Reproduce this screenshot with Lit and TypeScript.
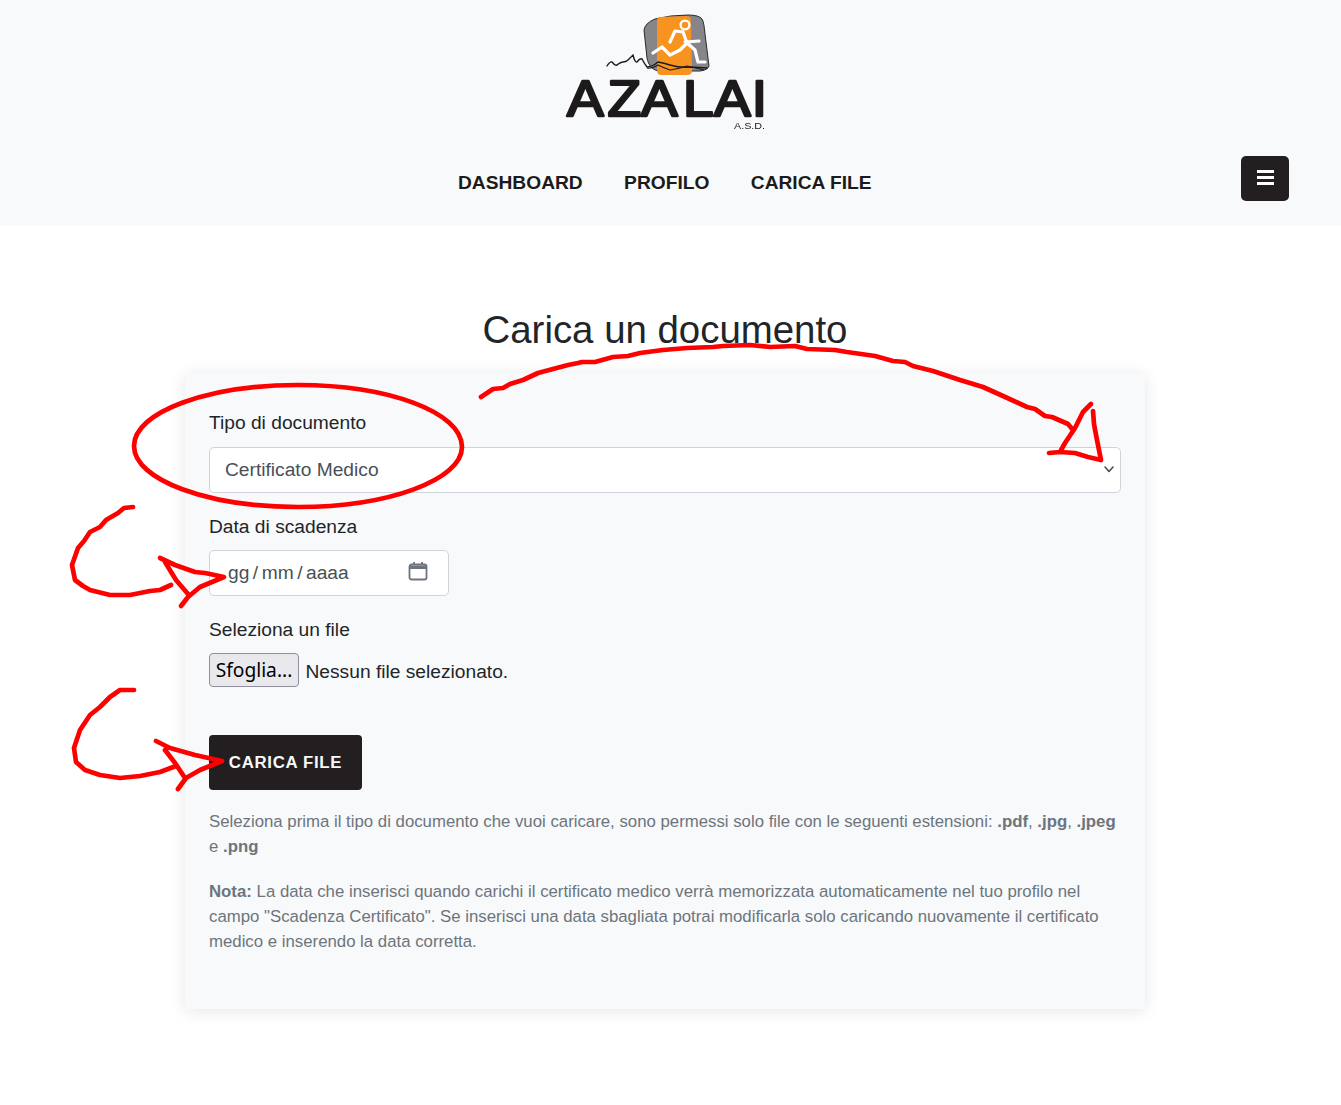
import { LitElement, html, css, svg } from "lit";
import { customElement } from "lit/decorators.js";

const logo = svg`
  <path d="M644 30 Q645 23 655 19 Q670 15 688 15 Q699 15 702 19 Q704 22 705 34 L709 66 Q708 70 700 71 L658 71 Q649 69 647 58 Z" fill="#85858a" stroke="#2a2a2a" stroke-width="1"/>
  <path d="M660 17 L686 16 Q691 16 691 21 L692 71 Q692 75 687 75 L661 75 Q657 75 657 70 L657 21 Q657 17 660 17 Z" fill="#f7931e"/>
  <path d="M607 66 Q610 61 612 62 Q615 66 617 65 Q621 62 623 62 Q626 62 628 60 L633 55 Q635 63 637 62 Q640 58 642 59 Q644 63 647 67 Q652 67 658 62 Q664 63 670 65 Q680 68 690 67 L707 68" fill="none" stroke="#1d1a1b" stroke-width="1.4" stroke-linecap="round"/>
  <path d="M647 68 Q652 69 658 65 Q664 68 670 70 Q678 69 687 66 Q696 68 704 70" fill="none" stroke="#1d1a1b" stroke-width="1.2"/>
  <circle cx="685" cy="25" r="4.4" fill="none" stroke="#fff" stroke-width="2.4"/>
  <path d="M683 32 L687 43 M683 32 L675 31 L670 42 M685 42 L699 41 M687 43 L680 50 L670 55 L662 47 L653 53 M687 43 L695 50 L698 62 L705 62" fill="none" stroke="#fff" stroke-width="3.2" stroke-linecap="round" stroke-linejoin="round"/>
  <text class="lt" transform="translate(567 116) scale(1.1 1)" x="0 36.8 67.3 105.5 133.6 168" y="0">AZALAI</text>
  <text class="ls" x="734" y="129" textLength="31" lengthAdjust="spacingAndGlyphs">A.S.D.</text>
`;

const ink = svg`
  <path d="M481 397 L493 389 L503 388 L510 384 L523 380 L538 373 L553 369 L568 365 L578 363 L582 362 L595 362 L613 357 L628 356 L640 353 L663 350 L687 348 L713 347 L723 346 L750 345 L770 347 L795 346 L807 349 L835 350 L847 352 L875 356 L893 361 L905 362 L913 366 L933 371 L960 380 L983 387 L1003 396 L1027 407 L1035 409 L1045 416 L1052 417 L1068 424 L1073 430"/>
  <path d="M1091 404 L1083 412 L1075 428 L1065 443 L1060 452 M1049 453 L1060 452 L1075 453 L1088 457 L1101 460 L1097 440 L1094 424 L1093 411"/>
  <path d="M298 385 C 208 385 134 412 134 446 C 134 480 208 507 298 507 C 388 507 462 480 462 447 C 462 412 388 385 298 385 Z"/>
  <path d="M133 507 L124 508 L118 513 L106 520 L100 527 L90 532 L84 541 L78 548 L72 565 L75 580 L83 586 L90 590 L110 595 L130 595 L150 591 L160 590 L171 585"/>
  <path d="M160 558 L175 565 L195 572 L205 573 L224 577 L200 587 L188 597 L181 606 M165 562 L176 580 L188 594"/>
  <path d="M134 690 L120 690 L110 697 L100 707 L90 715 L80 730 L74 748 L76 762 L85 770 L100 775 L120 778 L140 776 L160 772 L176 766"/>
  <path d="M156 741 L170 748 L195 755 L222 761 L200 770 L186 778 L178 789 M165 750 L175 763 L185 778"/>
`;

@customElement("app-root")
export class AppRoot extends LitElement {
  static styles = css`
    :host { display: block; position: relative; height: 1105px; overflow: hidden; background: #fff; color: #212529; font-family: "Liberation Sans", Arial, sans-serif; font-size: 19.2px; }
    * { box-sizing: border-box; }
    header { background: #f8f9fa; height: 225.6px; position: relative; }
    .logo { display: block; width: 202px; height: 120px; margin-left: 564px; position: relative; top: 12px; filter: blur(.3px); }
    .lt { font: 400 50px "Liberation Sans", Arial, sans-serif; fill: #1d1a1b; stroke: #1d1a1b; stroke-width: 2.4; stroke-linejoin: round; }
    .ls { font: 400 9.5px "Liberation Sans", Arial, sans-serif; fill: #1d1a1b; }
    nav { display: flex; gap: 41.4px; margin-left: 458px; padding-top: 51px; }
    nav a { color: #1d1a1b; font-weight: 700; font-size: 19.2px; line-height: 23px; white-space: nowrap; }
    .burger { position: absolute; left: 1241px; top: 156px; width: 48px; height: 45px; background: #231f20; border-radius: 5px; display: flex; align-items: center; justify-content: center; padding-bottom: 3px; }
    main { width: 960px; margin-left: 185px; }
    h1 { margin: 80px 0 19px; height: 48px; font-size: 38.4px; font-weight: 400; line-height: 48px; text-align: center; white-space: nowrap; color: #212529; }
    .card { height: 636.4px; background: #f8f9fa; border-radius: 3px; box-shadow: 0 2px 16px rgba(0,0,0,.1); padding: 37.4px 24px 0; }
    label { display: block; height: 25px; line-height: 25px; margin-bottom: 13px; white-space: nowrap; }
    .first { margin-bottom: 12px; }
    .tight { margin-bottom: 11px; }
    .select { position: relative; height: 46px; margin-bottom: 21px; }
    select { appearance: none; display: block; width: 100%; height: 100%; padding: 0 40px 0 15px; background: #fff; border: 1px solid #ced4da; border-radius: 5px; color: #495057; font: inherit; }
    .select svg { position: absolute; right: 5px; top: 17px; }
    .date { width: 240px; height: 46px; background: #fff; border: 1px solid #ced4da; border-radius: 5px; display: flex; align-items: center; padding: 0 20px 0 18px; color: #495057; margin-bottom: 21px; }
    .date .seg { margin: 0 3.5px; }
    .date .seg:first-child { margin-left: 0; }
    .date svg { margin-left: auto; margin-bottom: 3px; }
    .file { display: flex; align-items: center; height: 34px; margin-top: -2px; margin-bottom: 48px; }
    .browse { width: 90px; height: 34px; display: flex; align-items: center; justify-content: center; padding-bottom: 1px; background: #e9e9ed; border: 1px solid #8f8f9d; border-radius: 4px; color: #000; font: 400 19.2px "Noto Sans", sans-serif; white-space: nowrap; }
    .file span { margin-left: 6.5px; padding-top: 4px; white-space: nowrap; }
    button { display: block; width: 153px; height: 55px; padding: 2px 0 0; background: #231f20; color: #f8f9fa; border: 0; border-radius: 4px; font: 700 16.8px "Liberation Sans", Arial, sans-serif; letter-spacing: .7px; margin-bottom: 19px; }
    p { margin: 0 0 19.6px; color: #6c757d; font-size: 16.8px; line-height: 25.2px; }
    .ink { position: absolute; left: 0; top: 0; pointer-events: none; }
    .ink path { fill: none; stroke: #fe0000; stroke-width: 4.7; stroke-linecap: round; stroke-linejoin: round; }
  `;

  render() {
    return html`
      <header>
        <svg class="logo" viewBox="564 12 202 120" aria-label="Azalai A.S.D.">${logo}</svg>
        <nav><a>DASHBOARD</a><a>PROFILO</a><a>CARICA FILE</a></nav>
        <div class="burger">
          <svg width="17" height="15" viewBox="0 0 17 15" fill="#fff"><rect y="0" width="17" height="3"/><rect y="6" width="17" height="3"/><rect y="12" width="17" height="3"/></svg>
        </div>
      </header>
      <main>
        <h1>Carica un documento</h1>
        <div class="card">
          <label class="first">Tipo di documento</label>
          <div class="select">
            <select><option>Certificato Medico</option></select>
            <svg width="14" height="12" viewBox="0 0 14 12" fill="none" stroke="#495057" stroke-width="1.6" stroke-linecap="round" stroke-linejoin="round"><path d="M3 3 L7 7.5 L11 3"/></svg>
          </div>
          <label class="tight">Data di scadenza</label>
          <div class="date">
            <span class="seg">gg</span>/<span class="seg">mm</span>/<span class="seg">aaaa</span>
            <svg width="20" height="20" viewBox="0 0 20 20" fill="none" stroke="#6c757d" stroke-width="1.8"><rect x="1.5" y="3.5" width="17" height="15" rx="2"/><path d="M2 4.5 H18 V8 H2 Z" fill="#6c757d" stroke="none"/><path d="M6 1 V4 M14 1 V4"/></svg>
          </div>
          <label>Seleziona un file</label>
          <div class="file"><div class="browse">Sfoglia...</div><span>Nessun file selezionato.</span></div>
          <button>CARICA FILE</button>
          <p>Seleziona prima il tipo di documento che vuoi caricare, sono permessi solo file con le seguenti estensioni: <b>.pdf</b>, <b>.jpg</b>, <b>.jpeg</b> e <b>.png</b></p>
          <p><b>Nota:</b> La data che inserisci quando carichi il certificato medico verrà memorizzata automaticamente nel tuo profilo nel campo "Scadenza Certificato". Se inserisci una data sbagliata potrai modificarla solo caricando nuovamente il certificato medico e inserendo la data corretta.</p>
        </div>
      </main>
      <svg class="ink" width="1341" height="1105" viewBox="0 0 1341 1105">${ink}</svg>
    `;
  }
}
